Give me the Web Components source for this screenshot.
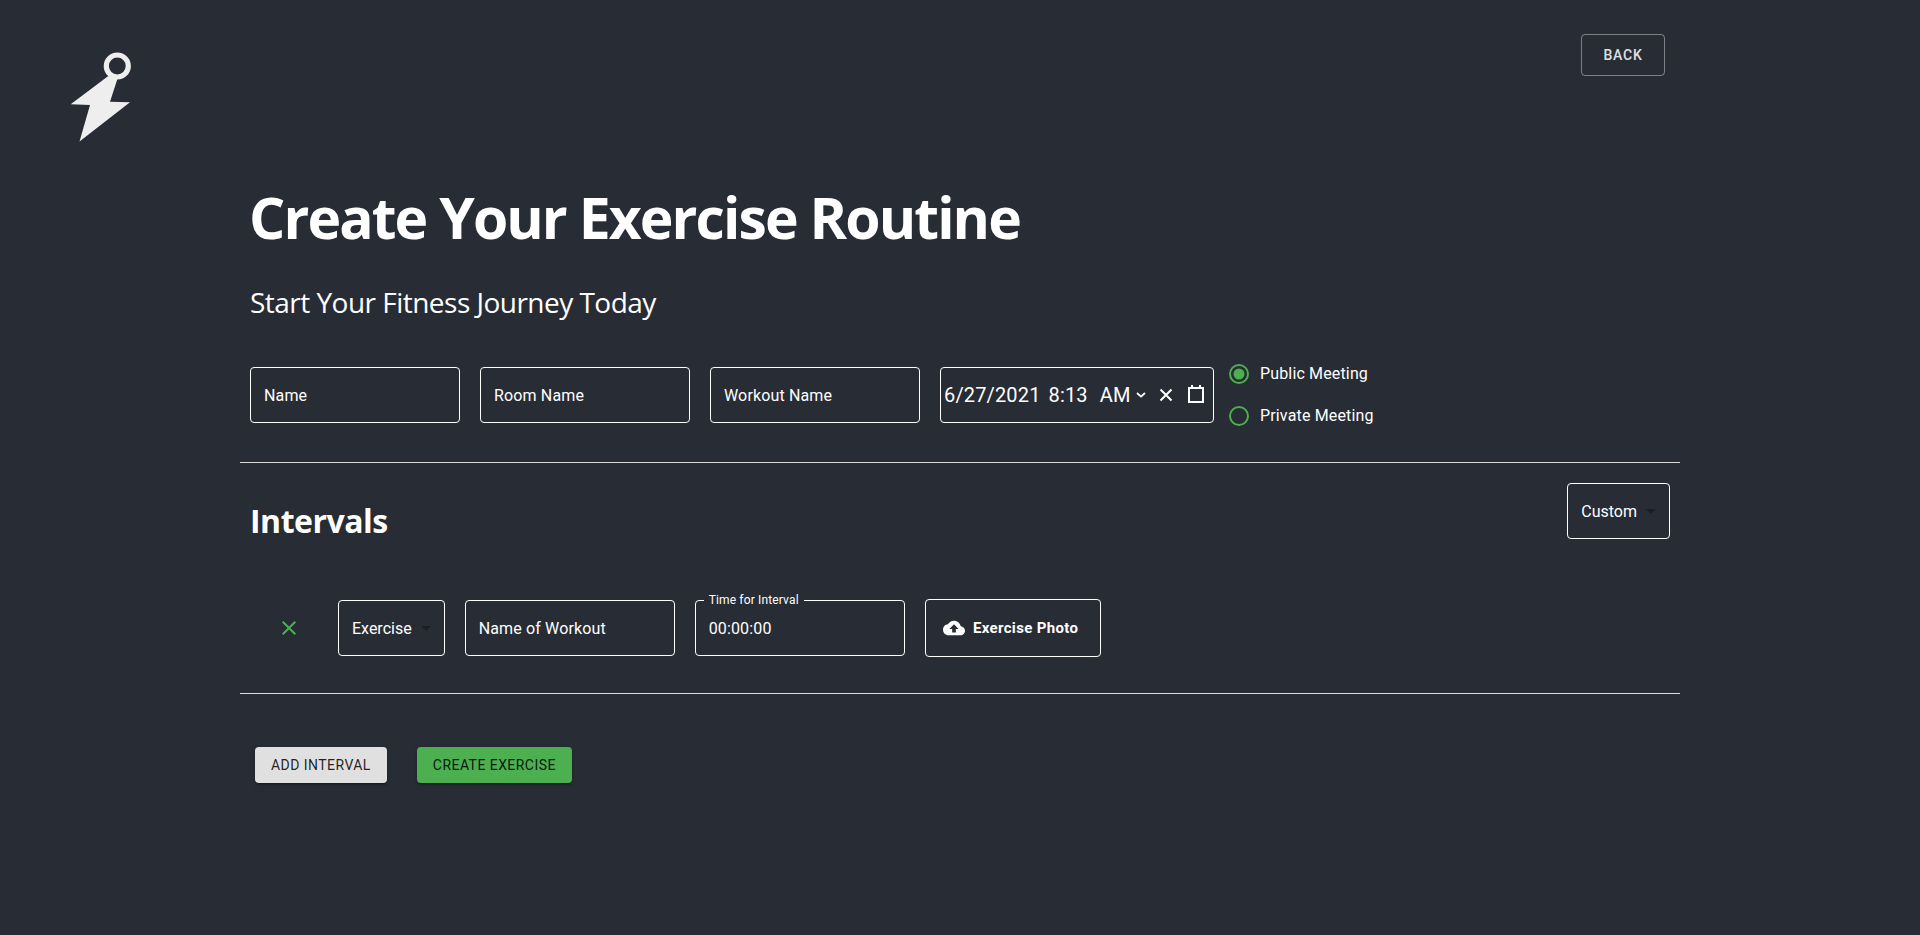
<!DOCTYPE html>
<html lang="en"><head><meta charset="utf-8"><title>Create Your Exercise Routine</title>
<style>
html,body{margin:0;padding:0;background:#282c34;color:#fff;font-family:Roboto,sans-serif}
body{min-height:935px;overflow:hidden}
</style></head><body>
<app-header></app-header>
<routine-page>
  <page-title slot="title" heading="Create Your Exercise Routine" sub="Start Your Fitness Journey Today"></page-title>
  <form-row slot="meeting">
    <text-field label="Name"></text-field>
    <text-field label="Room Name"></text-field>
    <text-field label="Workout Name"></text-field>
    <date-field></date-field>
    <radio-group>
      <radio-item checked>Public Meeting</radio-item>
      <radio-item>Private Meeting</radio-item>
    </radio-group>
  </form-row>
  <section-head slot="head" heading="Intervals"><select-box value="Custom"></select-box></section-head>
  <form-row slot="interval">
    <delete-icon></delete-icon>
    <select-box value="Exercise"></select-box>
    <text-field label="Name of Workout"></text-field>
    <text-field value="00:00:00" notch="Time for Interval"></text-field>
    <upload-button>Exercise Photo</upload-button>
  </form-row>
  <action-button slot="actions" bg="#e0e0e0">ADD INTERVAL</action-button>
  <action-button slot="actions" bg="#4caf50">CREATE EXERCISE</action-button>
</routine-page>
<script>
const define=(name,css,html,init)=>customElements.define(name,class extends HTMLElement{
  connectedCallback(){ if(this.shadowRoot)return;
    const r=this.attachShadow({mode:'open'});
    r.innerHTML='<style>'+css+'</style>'+(typeof html==='function'?html(this):html);
    if(init)init(this,r);
  }
});
const esc=s=>String(s||'').replace(/&/g,'&amp;').replace(/</g,'&lt;');
define('app-header',`:host{display:flex;justify-content:space-between;align-items:flex-start;height:146px;box-sizing:border-box;padding:34px 255px 0 60px}
 svg{display:block;margin-top:6px}
 a{box-sizing:border-box;display:flex;align-items:center;justify-content:center;width:84px;height:42px;border:1px solid rgba(255,255,255,.4);border-radius:4px;font:500 14px Roboto,sans-serif;letter-spacing:.8px;color:#e0e0e0}`,
 `<svg width="80" height="102" viewBox="60 40 80 102"><circle cx="117.3" cy="66" r="11" fill="none" stroke="#eee" stroke-width="5.200"/><polygon fill="#eee" points="108.300,76 117.300,79.300 110,101.700 130,102.300 79.500,141.500 90,105 70.700,104.300"/></svg><a>BACK</a>`);
define('routine-page',`:host{display:block;width:1440px;margin:0 auto}
 .pad{padding:0 10px}
 hr{margin:0;border:0;height:1px;background:#dcdcdc}
 .h1{margin-top:25px}
 .iv{padding:60px 10px 0}
 .h2{margin-top:36px}
 .act{display:flex;gap:30px;padding:53px 15px 0}`,
 `<div class="pad"><slot name="title"></slot></div><div class="pad"><slot name="meeting"></slot></div><hr class="h1"><div class="pad"><slot name="head"></slot></div><div class="iv"><slot name="interval"></slot></div><hr class="h2"><div class="act"><slot name="actions"></slot></div>`);
define('page-title',`:host{display:block;height:207px;box-sizing:border-box;padding-top:38px}
 h1{margin:0 0 0 -1px;font:700 57px/67px "Open Sans",sans-serif;color:#fff;letter-spacing:-1.9px;white-space:nowrap}
 p{margin:33px 0 0;font:400 28px/36px "Open Sans",sans-serif;color:#fff;letter-spacing:-.52px;white-space:nowrap}`,
 e=>`<h1>${esc(e.getAttribute('heading'))}</h1><p>${esc(e.getAttribute('sub'))}</p>`);
define('form-row',`:host{display:flex;align-items:center;gap:20px}`,`<slot></slot>`);
define('text-field',`:host{display:block;position:relative;box-sizing:border-box;width:210px;height:56px;border:1px solid #fff;border-radius:4px;padding:0 13px;font:400 16px/55px Roboto,sans-serif;letter-spacing:.15px;color:#fff}
 .n{position:absolute;left:8px;top:-8px;padding:0 5px;background:#282c34;font:400 12px/14px Roboto,sans-serif;white-space:nowrap}`,
 e=>`${e.getAttribute('notch')?`<span class="n">${esc(e.getAttribute('notch'))}</span>`:''}${esc(e.getAttribute('label')||e.getAttribute('value'))}`);
define('date-field',`:host{display:flex;align-items:center;box-sizing:border-box;width:274px;height:56px;border:1px solid #fff;border-radius:4px;padding-left:3px;font:400 20px/55px Roboto,sans-serif;letter-spacing:.15px;color:#fff;white-space:nowrap}
 .t{margin-left:8px}.a{margin-left:12px}
 svg{display:block;flex:none}`,
 `<span>6/27/2021</span><span class="t">8:13</span><span class="a">AM</span>
 <svg style="margin-left:3px;margin-top:-1px" width="14" height="14" viewBox="0 0 14 14"><path d="M3 5l4 3.600L11 5" fill="none" stroke="#fff" stroke-width="1.800"/></svg>
 <svg style="margin-left:10px" width="16" height="16" viewBox="0 0 16 16"><path d="M2.500 2.500l11 11M13.500 2.500l-11 11" fill="none" stroke="#fff" stroke-width="2"/></svg>
 <svg style="margin-left:13px;margin-top:-2px" width="18" height="20" viewBox="0 0 18 20"><path d="M2 4h14v14H2zM5 1v3M13 1v3" fill="none" stroke="#fff" stroke-width="2"/></svg>`);
define('radio-group',`:host{display:flex;flex-direction:column;margin-left:-16px}`,`<slot></slot>`);
define('radio-item',`:host{display:flex;align-items:center;height:42px;font:400 16px Roboto,sans-serif;letter-spacing:.15px;color:#fff;white-space:nowrap}
 svg{display:block}`,
 e=>`<svg width="42" height="42" viewBox="0 0 42 42"><circle cx="21" cy="21" r="9" fill="none" stroke="#4caf50" stroke-width="2"/>${e.hasAttribute('checked')?'<circle cx="21" cy="21" r="5.500" fill="#4caf50"/>':''}</svg><span style="margin-top:-2px"><slot></slot></span>`);
define('section-head',`:host{display:flex;justify-content:space-between;align-items:flex-start;box-sizing:border-box;padding-top:20px}
 h2{margin:20px 0 0;font:700 32px/36px "Open Sans",sans-serif;color:#fff;letter-spacing:-.5px}`,
 e=>`<h2>${esc(e.getAttribute('heading'))}</h2><slot></slot>`);
define('select-box',`:host{display:flex;align-items:center;box-sizing:border-box;height:56px;border:1px solid #fff;border-radius:4px;padding:0 6px 0 13px;font:400 16px Roboto,sans-serif;color:#fff}
 svg{display:block;margin-left:2px}`,
 e=>`${esc(e.getAttribute('value'))}<svg width="24" height="24" viewBox="0 0 24 24"><path d="M7 10l5 5 5-5z" fill="#1c1e22"/></svg>`);
define('delete-icon',`:host{display:flex;align-items:center;justify-content:center;box-sizing:border-box;width:63px;height:56px;padding-left:16px;margin-right:5px}`,
 `<svg style="margin-left:-1px" width="24" height="24" viewBox="0 0 24 24"><path d="M19 6.410L17.590 5 12 10.590 6.410 5 5 6.410 10.590 12 5 17.590 6.410 19 12 13.410 17.590 19 19 17.590 13.410 12z" fill="#4caf50"/></svg>`);
define('upload-button',`:host{display:flex;align-items:center;justify-content:center;box-sizing:border-box;width:176px;height:58px;border:1px solid #fff;border-radius:4px;padding-right:4px;font:700 15px Roboto,sans-serif;letter-spacing:.35px;color:#fff;gap:8px}
 svg{display:block}`,
 `<svg width="22" height="22" viewBox="0 0 24 24"><path fill="#fff" d="M19.350 10.040C18.670 6.590 15.640 4 12 4 9.110 4 6.600 5.640 5.350 8.040 2.340 8.360 0 10.910 0 14c0 3.310 2.690 6 6 6h13c2.760 0 5-2.240 5-5 0-2.640-2.050-4.780-4.650-4.960zM14 13v4h-4v-4H7l5-5 5 5h-3z"/></svg><slot></slot>`);
define('action-button',`:host{display:flex;align-items:center;box-sizing:border-box;height:36px;padding:0 16px 1px;border-radius:4px;font:400 14px Roboto,sans-serif;letter-spacing:.45px;color:rgba(0,0,0,.87);box-shadow:0 3px 1px -2px rgba(0,0,0,.2),0 2px 2px 0 rgba(0,0,0,.14),0 1px 5px 0 rgba(0,0,0,.12)}`,
 `<slot></slot>`,e=>{e.style.background=e.getAttribute('bg')});
</script>
</body></html>
